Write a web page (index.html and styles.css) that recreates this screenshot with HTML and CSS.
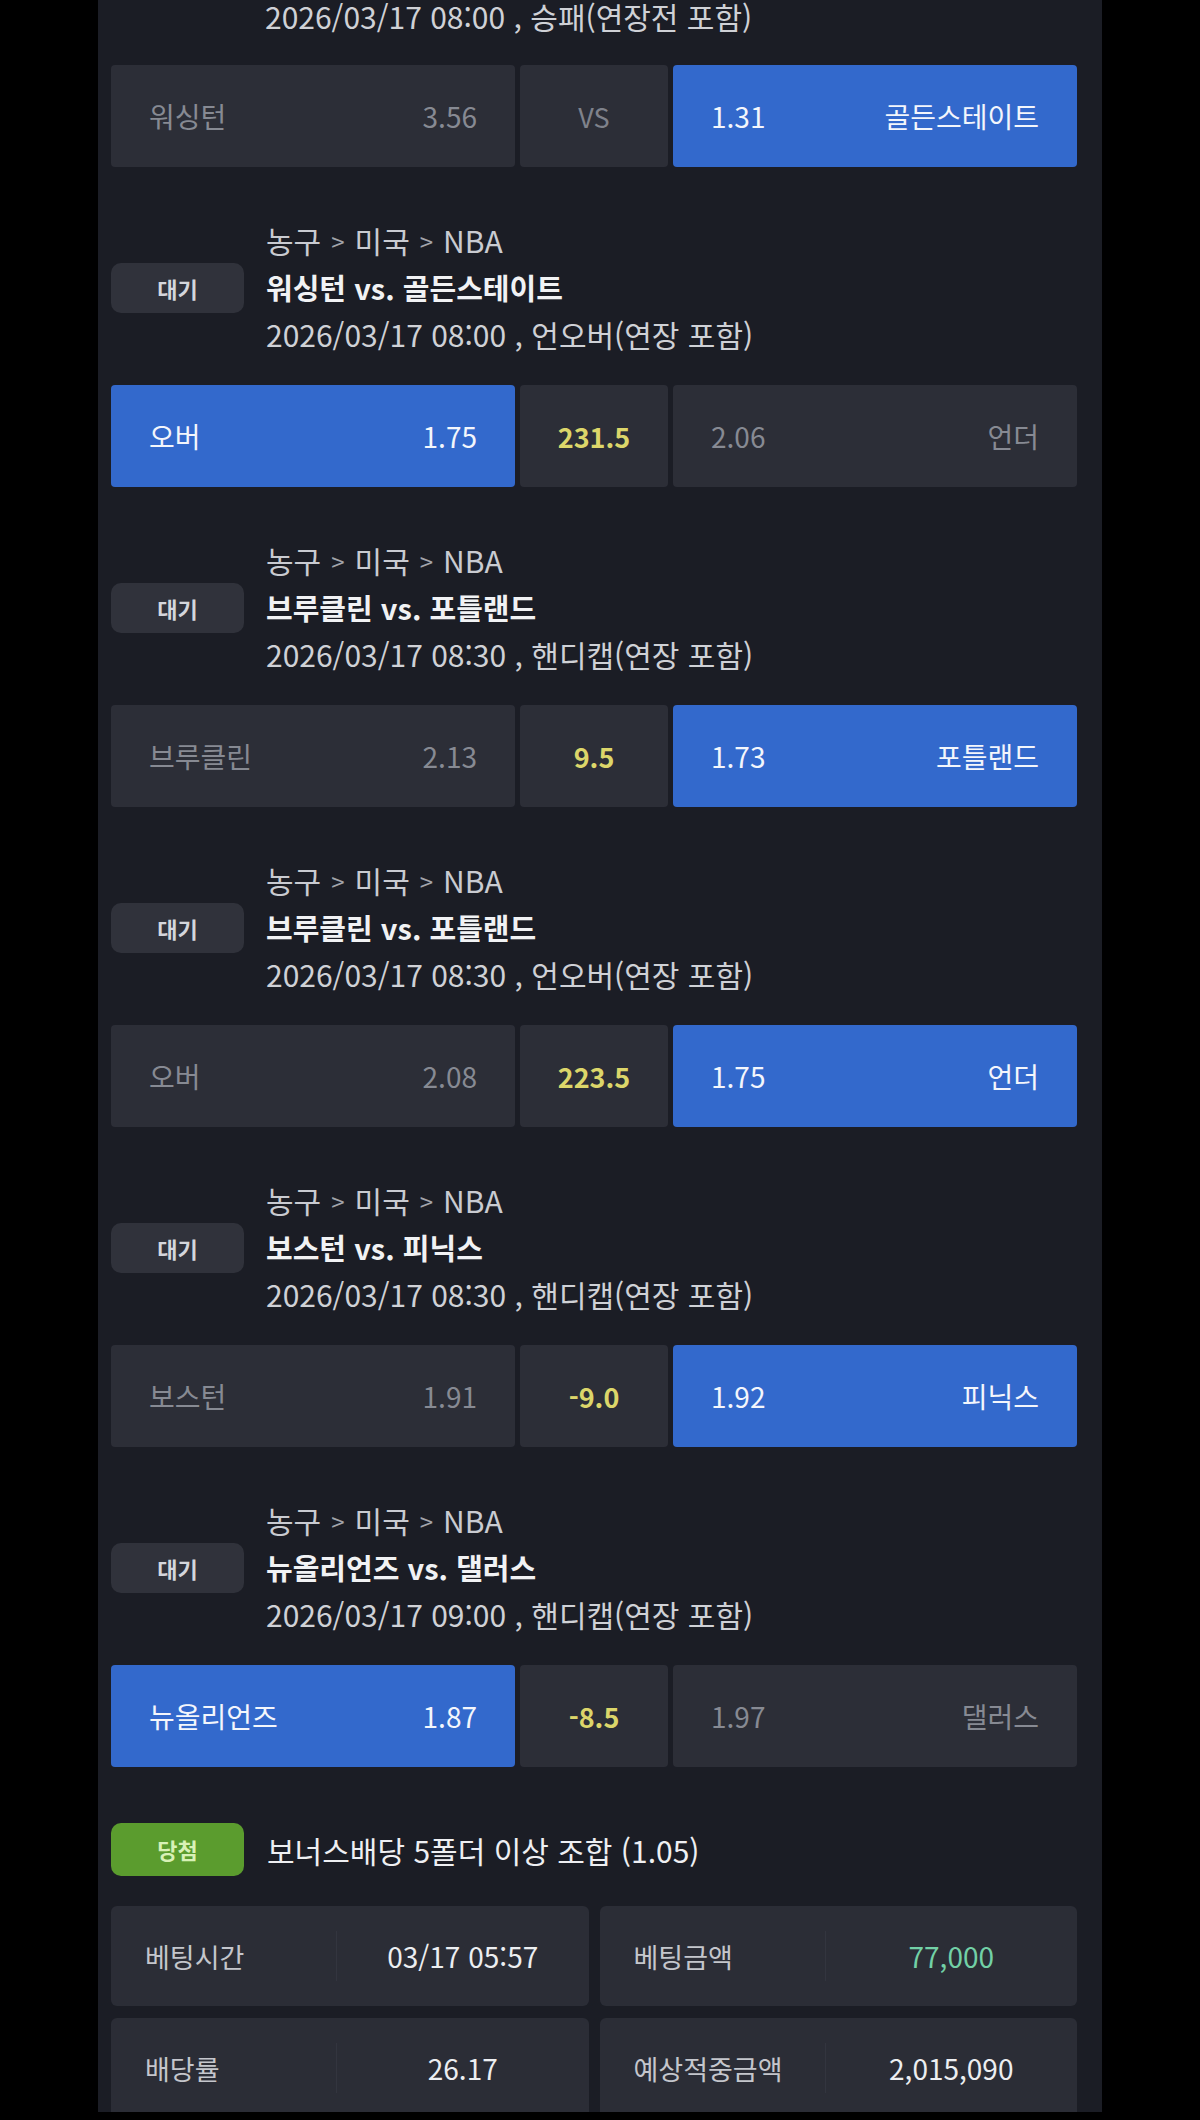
FILE: index.html
```html
<!DOCTYPE html>
<html lang="ko">
  <head>
    <meta charset="UTF-8" />
    <meta name="viewport" content="width=device-width, initial-scale=1.0" />
    <title>베팅내역</title>
    <link rel="stylesheet" href="styles.css">
  </head>
  <body>
    <div class="screen">
      <div class="panel">
        <!-- list is scrolled: only the last line of the first bet shows -->
        <div class="bet">
          <div class="bet-head cut">
            <div class="info">
              <div class="date">2026/03/17 08:00 , 승패(연장전 포함)</div>
            </div>
          </div>
          <div class="odds">
            <div class="pick"><span>워싱턴</span><span>3.56</span></div>
            <div class="mid vs">VS</div>
            <div class="pick on"><span>1.31</span><span>골든스테이트</span></div>
          </div>
        </div>

        <div class="bet">
          <div class="bet-head">
            <span class="badge">대기</span>
            <div class="info">
              <div class="crumb">농구<span class="sep">&gt;</span>미국<span class="sep">&gt;</span>NBA</div>
              <div class="teams">워싱턴 vs. 골든스테이트</div>
              <div class="date">2026/03/17 08:00 , 언오버(연장 포함)</div>
            </div>
          </div>
          <div class="odds">
            <div class="pick on"><span>오버</span><span>1.75</span></div>
            <div class="mid">231.5</div>
            <div class="pick"><span>2.06</span><span>언더</span></div>
          </div>
        </div>

        <div class="bet">
          <div class="bet-head">
            <span class="badge">대기</span>
            <div class="info">
              <div class="crumb">농구<span class="sep">&gt;</span>미국<span class="sep">&gt;</span>NBA</div>
              <div class="teams">브루클린 vs. 포틀랜드</div>
              <div class="date">2026/03/17 08:30 , 핸디캡(연장 포함)</div>
            </div>
          </div>
          <div class="odds">
            <div class="pick"><span>브루클린</span><span>2.13</span></div>
            <div class="mid">9.5</div>
            <div class="pick on"><span>1.73</span><span>포틀랜드</span></div>
          </div>
        </div>

        <div class="bet">
          <div class="bet-head">
            <span class="badge">대기</span>
            <div class="info">
              <div class="crumb">농구<span class="sep">&gt;</span>미국<span class="sep">&gt;</span>NBA</div>
              <div class="teams">브루클린 vs. 포틀랜드</div>
              <div class="date">2026/03/17 08:30 , 언오버(연장 포함)</div>
            </div>
          </div>
          <div class="odds">
            <div class="pick"><span>오버</span><span>2.08</span></div>
            <div class="mid">223.5</div>
            <div class="pick on"><span>1.75</span><span>언더</span></div>
          </div>
        </div>

        <div class="bet">
          <div class="bet-head">
            <span class="badge">대기</span>
            <div class="info">
              <div class="crumb">농구<span class="sep">&gt;</span>미국<span class="sep">&gt;</span>NBA</div>
              <div class="teams">보스턴 vs. 피닉스</div>
              <div class="date">2026/03/17 08:30 , 핸디캡(연장 포함)</div>
            </div>
          </div>
          <div class="odds">
            <div class="pick"><span>보스턴</span><span>1.91</span></div>
            <div class="mid">-9.0</div>
            <div class="pick on"><span>1.92</span><span>피닉스</span></div>
          </div>
        </div>

        <div class="bet">
          <div class="bet-head">
            <span class="badge">대기</span>
            <div class="info">
              <div class="crumb">농구<span class="sep">&gt;</span>미국<span class="sep">&gt;</span>NBA</div>
              <div class="teams">뉴올리언즈 vs. 댈러스</div>
              <div class="date">2026/03/17 09:00 , 핸디캡(연장 포함)</div>
            </div>
          </div>
          <div class="odds">
            <div class="pick on"><span>뉴올리언즈</span><span>1.87</span></div>
            <div class="mid">-8.5</div>
            <div class="pick"><span>1.97</span><span>댈러스</span></div>
          </div>
        </div>

        <div class="bonus">
          <span class="badge win">당첨</span>
          <span class="bonus-title">보너스배당 5폴더 이상 조합 (1.05)</span>
        </div>

        <div class="summary">
          <div class="cell">
            <span class="label">베팅시간</span>
            <span class="value">03/17 05:57</span>
          </div>
          <div class="cell">
            <span class="label">베팅금액</span>
            <span class="value green">77,000</span>
          </div>
          <div class="cell">
            <span class="label">배당률</span>
            <span class="value">26.17</span>
          </div>
          <div class="cell">
            <span class="label">예상적중금액</span>
            <span class="value">2,015,090</span>
          </div>
        </div>
      </div>
    </div>
  </body>
</html>
```

FILE: styles.css
```css
body {
  margin: 0;
  padding: 0;
  background-color: #000;
  font-family: "Noto Sans CJK KR", "Noto Sans", sans-serif;
  color: #e6e7ea;
}

.screen {
  height: 2112px;
  overflow: hidden;
}

.panel {
  width: 1004px;
  margin-left: 98px;
  padding: 0 25px 100px 13px;
  box-sizing: border-box;
  background-color: #1b1d25;
}

.bet {
  padding-bottom: 50px;
}

.bet-head {
  display: flex;
  align-items: center;
  gap: 22px;
  margin-bottom: 27px;
}

.bet-head.cut {
  padding-left: 154px;
  margin-bottom: 33px;
}

.bet-head.cut .info {
  line-height: 32px;
}

.badge {
  width: 133px;
  height: 50px;
  line-height: 50px;
  text-align: center;
  border-radius: 10px;
  background-color: #30323b;
  color: #d4d6dc;
  font-size: 22px;
  font-weight: bold;
  flex-shrink: 0;
}

.info {
  font-size: 30px;
  line-height: 47px;
  white-space: nowrap;
}

.crumb {
  color: #c9cbd1;
}

.sep {
  display: inline-block;
  margin: 0 10px;
  font-size: 24px;
  color: #a2a4ab;
  vertical-align: 2px;
}

.teams {
  color: #f1f2f4;
  font-size: 29px;
  font-weight: bold;
}

.date {
  color: #cfd1d6;
}

.odds {
  display: grid;
  grid-template-columns: 1fr 148px 1fr;
  gap: 5px;
  height: 102px;
}

.pick,
.mid {
  background-color: #2c2e37;
  border-radius: 4px;
  font-size: 28px;
}

.pick {
  display: flex;
  align-items: center;
  justify-content: space-between;
  padding: 0 38px;
  color: #878a93;
}

.pick.on {
  background-color: #3369cc;
  color: #f3f6fc;
}

.mid {
  display: flex;
  align-items: center;
  justify-content: center;
  color: #dcd66a;
  font-size: 27px;
  font-weight: bold;
}

.mid.vs {
  color: #7f828b;
  font-weight: normal;
}

.bonus {
  display: flex;
  align-items: center;
  gap: 23px;
  padding-top: 6px;
  margin-bottom: 30px;
}

.badge.win {
  height: 53px;
  line-height: 53px;
  background-color: #5b9c2e;
  color: #d8f1b6;
}

.bonus-title {
  font-size: 30px;
  color: #eeeff2;
}

.summary {
  display: grid;
  grid-template-columns: 1fr 1fr;
  gap: 12px 11px;
}

.cell {
  display: grid;
  grid-template-columns: 225px 1fr;
  align-items: center;
  height: 100px;
  background-color: #2b2d36;
  border-radius: 6px;
  font-size: 28px;
}

.label {
  padding-left: 34px;
  font-size: 27px;
  color: #c4c6cc;
}

.value {
  height: 50px;
  line-height: 50px;
  text-align: center;
  border-left: 1px solid #33353f;
  color: #eceef1;
}

.value.green {
  color: #72d0a6;
}
```
